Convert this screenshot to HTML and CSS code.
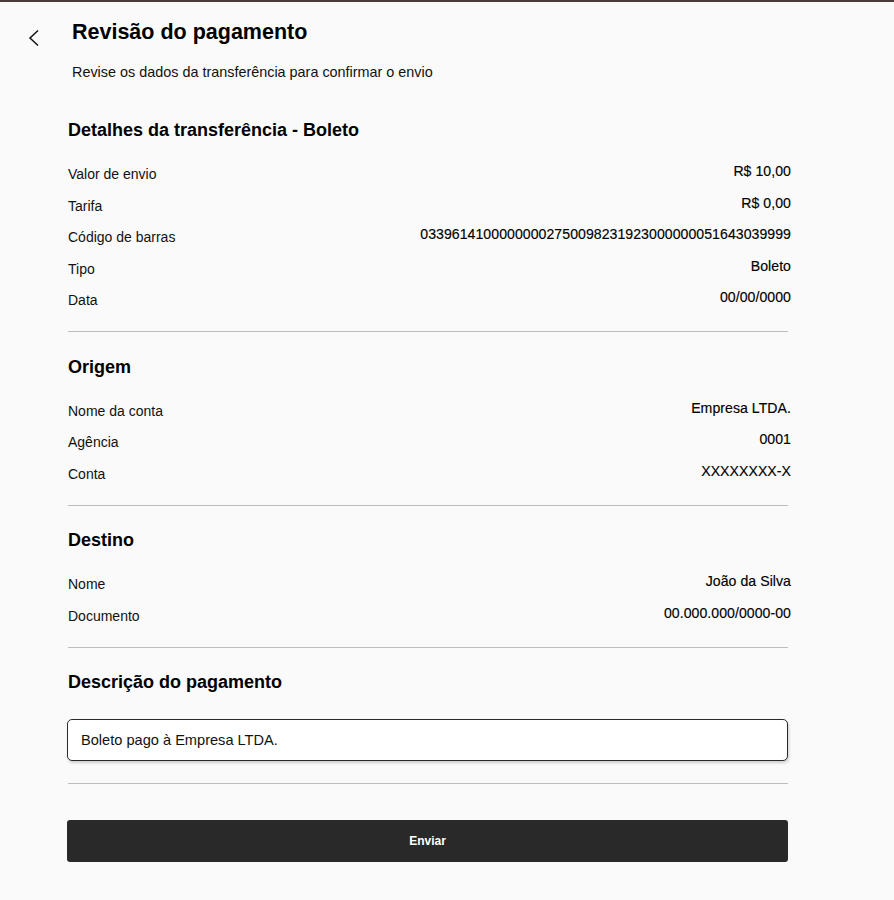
FILE: index.html
```html
<!DOCTYPE html>
<html lang="pt-BR">
<head>
<meta charset="utf-8">
<title>Revisão do pagamento</title>
<link rel="stylesheet" href="styles.css">
</head>
<body>
<div class="topbar"></div>
<header class="header">
  <button class="back" aria-label="Voltar">
    <svg width="12" height="18" viewBox="0 0 12 18"><path d="M10 1.5 L2 9 L10 16.5" fill="none" stroke="#111" stroke-width="1.5"/></svg>
  </button>
  <div class="titles">
    <h1 class="title">Revisão do pagamento</h1>
    <p class="subtitle">Revise os dados da transferência para confirmar o envio</p>
  </div>
</header>
<main class="content">
  <section class="section first">
    <h2 class="heading">Detalhes da transferência - Boleto</h2>
    <div class="row"><span class="label">Valor de envio</span><span class="value">R$ 10,00</span></div>
    <div class="row"><span class="label">Tarifa</span><span class="value">R$ 0,00</span></div>
    <div class="row"><span class="label">Código de barras</span><span class="value">03396141000000002750098231923000000051643039999</span></div>
    <div class="row"><span class="label">Tipo</span><span class="value">Boleto</span></div>
    <div class="row"><span class="label">Data</span><span class="value">00/00/0000</span></div>
  </section>
  <hr class="divider">
  <section class="section">
    <h2 class="heading">Origem</h2>
    <div class="row"><span class="label">Nome da conta</span><span class="value">Empresa LTDA.</span></div>
    <div class="row"><span class="label">Agência</span><span class="value">0001</span></div>
    <div class="row"><span class="label">Conta</span><span class="value">XXXXXXXX-X</span></div>
  </section>
  <hr class="divider">
  <section class="section">
    <h2 class="heading">Destino</h2>
    <div class="row"><span class="label">Nome</span><span class="value">João da Silva</span></div>
    <div class="row"><span class="label">Documento</span><span class="value">00.000.000/0000-00</span></div>
  </section>
  <hr class="divider">
  <section class="section desc">
    <h2 class="heading">Descrição do pagamento</h2>
    <div class="input">Boleto pago à Empresa LTDA.</div>
  </section>
  <hr class="divider last">
  <button class="submit">Enviar</button>
</main>
</body>
</html>
```
FILE: styles.css
```css
* { box-sizing: border-box; }
html, body { margin: 0; padding: 0; }
body {
  background: #fafafa;
  font-family: "Liberation Sans", Arial, sans-serif;
  color: #111;
}
.topbar { height: 2px; background: #4a3b3b; }
.header {
  display: flex;
  align-items: flex-start;
  padding: 17px 0 0 0;
}
.back {
  margin: 10px 0 0 28px;
  width: 12px;
  height: 18px;
  padding: 0;
  border: 0;
  background: none;
  display: block;
}
.back svg { display: block; }
.titles { margin-left: 32px; }
.title {
  margin: 0;
  font-size: 21.5px;
  line-height: 26px;
  font-weight: bold;
  color: #000;
}
.subtitle {
  margin: 18px 0 0 0;
  font-size: 14.4px;
  line-height: 18px;
}
.content {
  margin-left: 68px;
  width: 720px;
  padding-top: 37px;
}
.heading {
  margin: 0 0 19px 0;
  font-size: 18px;
  line-height: 24px;
  font-weight: bold;
  color: #000;
}
.row {
  display: flex;
  justify-content: space-between;
  align-items: flex-start;
  height: 31.5px;
  margin-right: -3px;
}
.label {
  font-size: 14px;
  line-height: 20px;
  padding-top: 3px;
}
.value {
  font-size: 14.1px;
  line-height: 20px;
  color: #000;
  letter-spacing: 0.05px;
  -webkit-text-stroke: 0.15px #000;
}
.divider {
  border: 0;
  border-top: 1px solid #bdbdbd;
  margin: 0 0 22.5px 0;
  height: 0;
}
.section { padding-bottom: 12.5px; }
.section.first { padding-bottom: 12.5px; }
.desc { padding-bottom: 22.5px; }
.desc .heading { margin-bottom: 24.5px; }
.divider.last { margin-bottom: 36px; }
.input {
  height: 42px;
  border: 1px solid #2a2a2a;
  border-radius: 5px;
  background: #fff;
  box-shadow: 1px 2px 3px rgba(0,0,0,0.18);
  padding: 0 13px;
  font-size: 14.6px;
  line-height: 40px;
  margin-left: -1px;
}
.submit {
  display: block;
  width: 721px;
  height: 42px;
  margin: 0 0 0 -1px;
  border: 0;
  border-radius: 3px;
  background: #292929;
  color: #fff;
  font-family: "Liberation Sans", Arial, sans-serif;
  font-weight: bold;
  font-size: 12px;
}
```
